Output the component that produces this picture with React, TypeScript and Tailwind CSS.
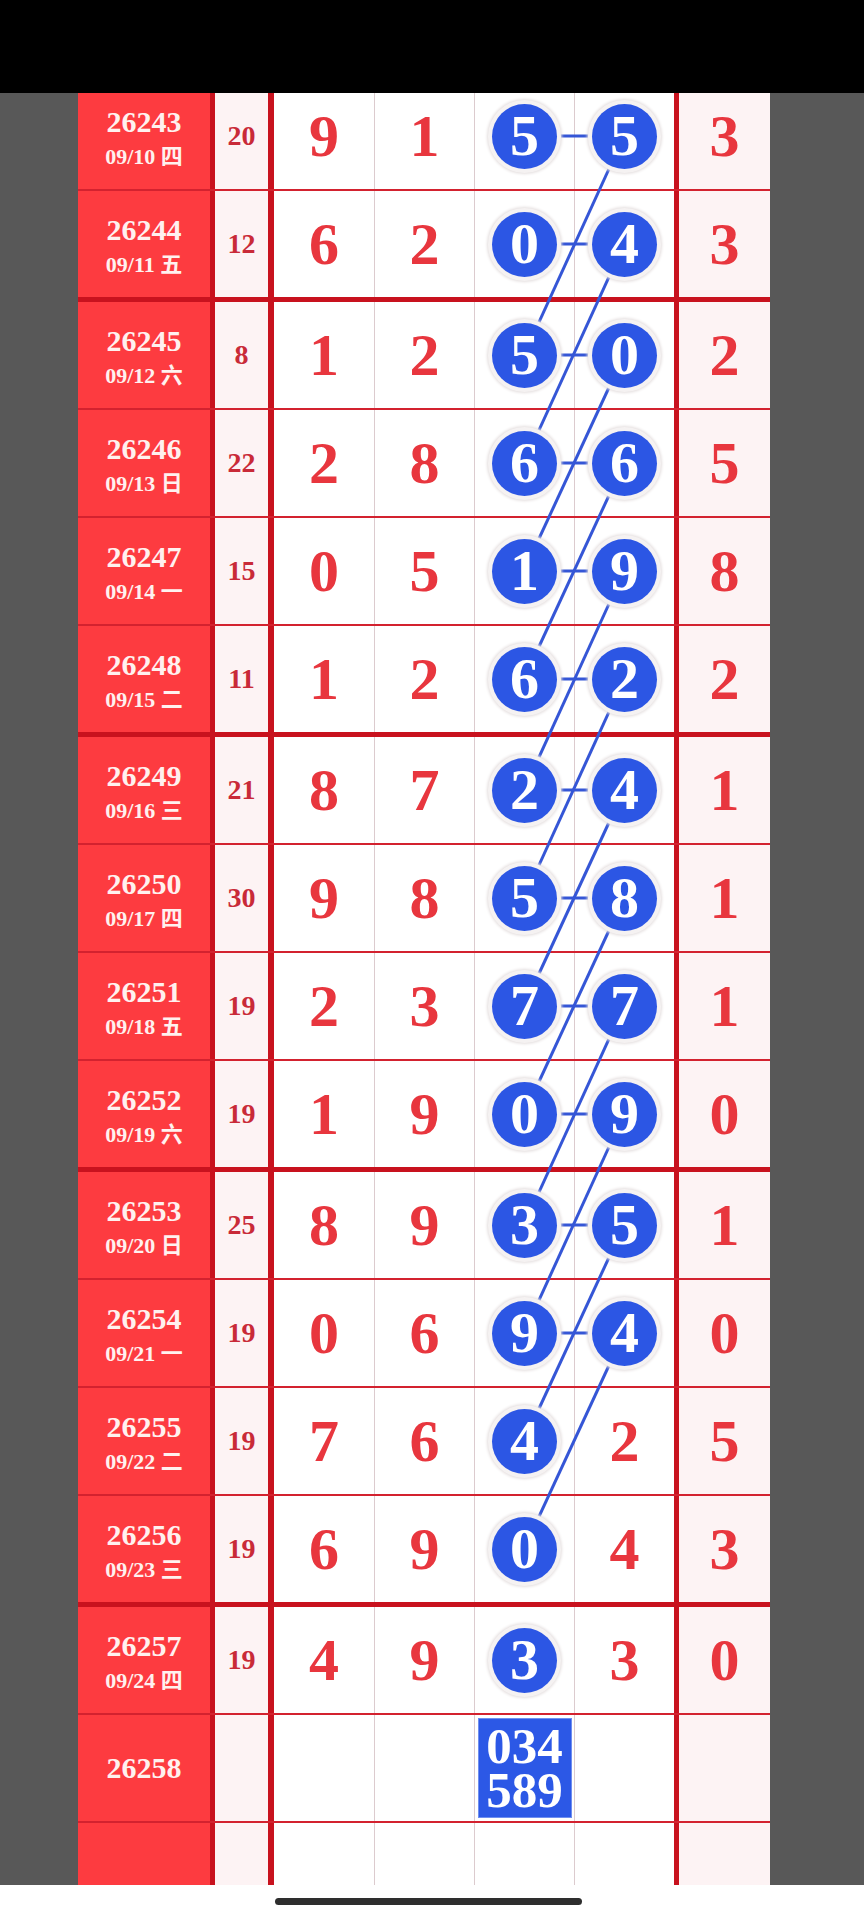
type Row = {
  no: string;
  date?: string;
  sum?: string;
  d?: string[];
  b3?: boolean;
  b4?: boolean;
  last?: string;
  box?: boolean;
};

const rows: Row[] = [
  { no: "26243", date: "09/10 四", sum: "20", d: ["9", "1", "5", "5"], b3: true, b4: true, last: "3" },
  { no: "26244", date: "09/11 五", sum: "12", d: ["6", "2", "0", "4"], b3: true, b4: true, last: "3" },
  { no: "26245", date: "09/12 六", sum: "8", d: ["1", "2", "5", "0"], b3: true, b4: true, last: "2" },
  { no: "26246", date: "09/13 日", sum: "22", d: ["2", "8", "6", "6"], b3: true, b4: true, last: "5" },
  { no: "26247", date: "09/14 一", sum: "15", d: ["0", "5", "1", "9"], b3: true, b4: true, last: "8" },
  { no: "26248", date: "09/15 二", sum: "11", d: ["1", "2", "6", "2"], b3: true, b4: true, last: "2" },
  { no: "26249", date: "09/16 三", sum: "21", d: ["8", "7", "2", "4"], b3: true, b4: true, last: "1" },
  { no: "26250", date: "09/17 四", sum: "30", d: ["9", "8", "5", "8"], b3: true, b4: true, last: "1" },
  { no: "26251", date: "09/18 五", sum: "19", d: ["2", "3", "7", "7"], b3: true, b4: true, last: "1" },
  { no: "26252", date: "09/19 六", sum: "19", d: ["1", "9", "0", "9"], b3: true, b4: true, last: "0" },
  { no: "26253", date: "09/20 日", sum: "25", d: ["8", "9", "3", "5"], b3: true, b4: true, last: "1" },
  { no: "26254", date: "09/21 一", sum: "19", d: ["0", "6", "9", "4"], b3: true, b4: true, last: "0" },
  { no: "26255", date: "09/22 二", sum: "19", d: ["7", "6", "4", "2"], b3: true, last: "5" },
  { no: "26256", date: "09/23 三", sum: "19", d: ["6", "9", "0", "4"], b3: true, last: "3" },
  { no: "26257", date: "09/24 四", sum: "19", d: ["4", "9", "3", "3"], b3: true, last: "0" },
  { no: "26258", box: true },
  { no: "" },
];

// row geometry (px, relative to the table top)
const centers: number[] = [];
let top = 0;
rows.forEach((_, i) => {
  const bw = i === 0 ? 0 : i % 4 === 2 ? 5 : 2;
  centers.push(top + bw + 53);
  top += 106 + bw;
});

// ball column centers
const X3 = 446;
const X4 = 546;

function Ball({ n }: { n: string }) {
  return (
    <div className="relative z-10 flex h-[65px] w-[65px] items-center justify-center rounded-full bg-[#2c56e4] text-[58px] font-bold leading-none text-white shadow-[0_0_0_4px_#f5f2f2,0_0_3px_5px_#e4dede]">
      {n}
    </div>
  );
}

function Digit({ n }: { n?: string }) {
  return <span className="text-[60px] font-bold leading-none text-[#e8363e]">{n}</span>;
}

function TableRow({ row, i }: { row: Row; i: number }) {
  const isLast = i === rows.length - 1;
  const rowCls =
    i === 0
      ? "h-[106px]"
      : i % 4 === 2
        ? "h-[111px] border-t-[5px] border-t-[#c8121e]"
        : isLast
          ? "h-[64px] border-t-2 border-t-[#d3222f]"
          : "h-[108px] border-t-2 border-t-[#d3222f]";

  return (
    <div className={`flex ${rowCls}`}>
      <div className="flex w-[137px] flex-col items-center justify-center border-r-[5px] border-r-[#c8121e] bg-[#fd3b40] pt-[6px] text-[#fff1ef]">
        {row.no && <span className="text-[30px] font-bold leading-[30px]">{row.no}</span>}
        {row.date && (
          <span className="mt-[5px] text-[22px] font-bold leading-[30px]">{row.date}</span>
        )}
        {row.box && <span className="h-[6px]" />}
      </div>
      <div className="flex w-[59px] items-center justify-center border-r-[6px] border-r-[#c8121e] bg-[#fdf3f4]">
        <span className="text-[28px] font-bold leading-none text-[#c92a38]">{row.sum}</span>
      </div>
      <div className="flex w-[100px] items-center justify-center bg-white">
        {row.d && <Digit n={row.d[0]} />}
      </div>
      <div className="flex w-[100px] items-center justify-center border-l border-l-[#dccbce] bg-white">
        {row.d && <Digit n={row.d[1]} />}
      </div>
      <div className="flex w-[100px] items-center justify-center border-l border-l-[#dccbce] bg-white">
        {row.d && (row.b3 ? <Ball n={row.d[2]} /> : <Digit n={row.d[2]} />)}
        {row.box && (
          <div className="flex h-[100px] w-[94px] items-center justify-center border border-[#6f8ef0] bg-[#2c58e6] text-center text-[51px] font-bold leading-[44px] text-white">
            <span>
              034
              <br />
              589
            </span>
          </div>
        )}
      </div>
      <div className="flex w-[105px] items-center justify-center border-l border-r-[5px] border-l-[#dccbce] border-r-[#c8121e] bg-white">
        {row.d && (row.b4 ? <Ball n={row.d[3]} /> : <Digit n={row.d[3]} />)}
      </div>
      <div className="flex w-[91px] items-center justify-center bg-[#fdf3f4]">
        {row.last && <Digit n={row.last} />}
      </div>
    </div>
  );
}

export default function App() {
  return (
    <div className="flex h-[1920px] w-[864px] flex-col overflow-hidden bg-white font-['Liberation_Serif','Noto_Sans_CJK_SC',serif]">
      <div className="relative z-20 h-[93px] shrink-0 bg-black" />

      <div className="-mt-[10px] flex h-[1802px] shrink-0">
        <div className="w-[78px] bg-[#585858]" />
        <div className="relative w-[692px] overflow-hidden">
          {rows.map((row, i) => (
            <TableRow key={i} row={row} i={i} />
          ))}
          <svg
            className="pointer-events-none absolute left-0 top-0 z-[5]"
            width={692}
            height={1802}
          >
            {rows.map((row, i) =>
              row.b3 && row.b4 ? (
                <line key={`h${i}`} x1={X3} y1={centers[i]} x2={X4} y2={centers[i]} stroke="#3556d6" strokeWidth={3} />
              ) : null
            )}
            {rows.map((row, i) =>
              row.b4 && rows[i + 2]?.b3 ? (
                <line
                  key={`d${i}`}
                  x1={X4}
                  y1={centers[i]}
                  x2={X3}
                  y2={centers[i + 2]}
                  stroke="#3556d6"
                  strokeWidth={3}
                />
              ) : null
            )}
          </svg>
        </div>
        <div className="w-[94px] bg-[#585858]" />
      </div>

      <div className="flex h-[35px] shrink-0 justify-center bg-white">
        <div className="mr-[7px] mt-[13px] h-[7px] w-[307px] rounded-full bg-[#2e2e2e]" />
      </div>
    </div>
  );
}
